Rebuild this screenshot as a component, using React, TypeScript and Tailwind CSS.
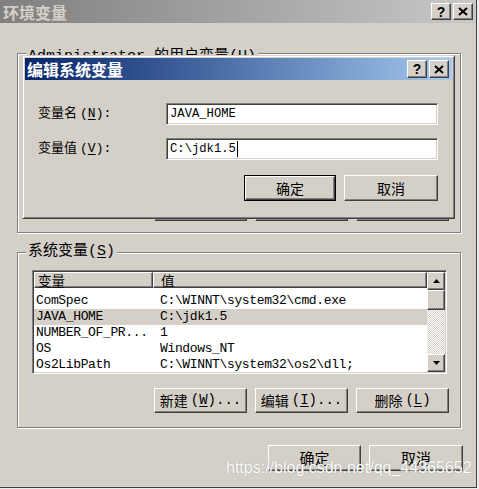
const raised =
  "border border-t-white border-l-white border-r-[#404040] border-b-[#404040] shadow-[inset_-1px_-1px_0_#808080]";
const sunken =
  "border border-t-[#808080] border-l-[#808080] border-r-white border-b-white shadow-[inset_1px_1px_0_#404040,inset_-1px_-1px_0_#d4d0c8]";
const cjk = "[font-family:'Noto_Sans_CJK_SC',sans-serif]";
const mono = "[font-family:'Liberation_Mono','Noto_Sans_CJK_SC',monospace]";

function CaptionButton({ kind, h }: { kind: "help" | "close"; h: string }) {
  return (
    <div className={`w-[20px] ${h} bg-[#d4d0c8] ${raised} flex items-center justify-center`}>
      {kind === "help" ? (
        <span className="text-[14px] leading-none font-bold text-black [font-family:'Liberation_Sans',sans-serif]">
          ?
        </span>
      ) : (
        <svg width="10" height="9" viewBox="0 0 10 9">
          <path d="M1 1 L9 8 M9 1 L1 8" stroke="black" strokeWidth="2" />
        </svg>
      )}
    </div>
  );
}

function Key({ k }: { k: string }) {
  return (
    <>
      (<span className="underline underline-offset-2">{k}</span>)
    </>
  );
}

function Button({
  children,
  className = "",
  isDefault = false,
}: {
  children: React.ReactNode;
  className?: string;
  isDefault?: boolean;
}) {
  const inner = (
    <div
      className={`w-full h-full bg-[#d4d0c8] ${raised} flex items-center justify-center text-black`}
    >
      {children}
    </div>
  );
  if (isDefault) {
    return <div className={`border border-black ${className}`}>{inner}</div>;
  }
  return <div className={className}>{inner}</div>;
}

const rows = [
  ["ComSpec", "C:\\WINNT\\system32\\cmd.exe"],
  ["JAVA_HOME", "C:\\jdk1.5"],
  ["NUMBER_OF_PR...", "1"],
  ["OS", "Windows_NT"],
  ["Os2LibPath", "C:\\WINNT\\system32\\os2\\dll;"],
];

function EditDialog() {
  return (
    <div className="absolute left-[22px] top-[55px] w-[433px] h-[164px] bg-[#d4d0c8] border border-t-[#d4d0c8] border-l-[#d4d0c8] border-r-[#404040] border-b-[#404040] shadow-[inset_1px_1px_0_#fff,inset_-1px_-1px_0_#808080] p-[2px] flex flex-col">
      <div className="h-[22px] flex items-center justify-between pl-[2px] pr-[3px] bg-gradient-to-r from-[#0a246a] to-[#a6caf0]">
        <span className={`text-white font-bold text-[16px] leading-none ${cjk}`}>编辑系统变量</span>
        <div className="flex gap-[2px]">
          <CaptionButton kind="help" h="h-[18px]" />
          <CaptionButton kind="close" h="h-[18px]" />
        </div>
      </div>
      <div className={`flex flex-col pl-[13px] pr-[14px] pt-[23px] text-[13px] ${mono}`}>
        <div className="flex items-center">
          <span className="w-[128px] text-black">
            变量名<span className="ml-[3px]"><Key k="N" />:</span>
          </span>
          <div className={`w-[272px] h-[22px] bg-white ${sunken} flex items-center pl-[3px] text-[12.2px] text-black`}>
            JAVA_HOME
          </div>
        </div>
        <div className="flex items-center mt-[13px]">
          <span className="w-[128px] text-black">
            变量值<span className="ml-[3px]"><Key k="V" />:</span>
          </span>
          <div className={`w-[272px] h-[22px] bg-white ${sunken} flex items-center pl-[3px] text-[12.2px] text-black`}>
            C:\jdk1.5
            <span className="inline-block w-px h-[16px] bg-black ml-px" />
          </div>
        </div>
        <div className={`flex justify-end gap-[8px] mt-[15px] text-[14px] ${cjk}`}>
          <Button isDefault className="w-[92px] h-[26px]">确定</Button>
          <Button className="w-[94px] h-[26px]">取消</Button>
        </div>
      </div>
    </div>
  );
}

function Group({
  label,
  labelTop,
  className = "",
  children,
}: {
  label: React.ReactNode;
  labelTop: string;
  className?: string;
  children: React.ReactNode;
}) {
  return (
    <div
      className={`relative border border-[#808080] shadow-[inset_1px_1px_0_#fff,1px_1px_0_#fff] ${className}`}
    >
      <span
        className={`absolute left-[8px] ${labelTop} px-[2px] bg-[#d4d0c8] text-[15px] leading-[18px] text-black`}
      >
        {label}
      </span>
      {children}
    </div>
  );
}

export default function App() {
  return (
    <div className="w-[479px] h-[489px] bg-[#ececec]">
      <div className="relative w-[477px] h-[488px] bg-[#d4d0c8] border-r border-b border-[#404040] flex flex-col">
        <div className="h-[23px] flex items-center justify-between pl-[3px] pr-[3px] bg-gradient-to-r from-[#808080] to-[#c8c8c8]">
          <span className={`text-[#d4d0c8] font-bold text-[16px] leading-none ${cjk}`}>环境变量</span>
          <div className="flex gap-[2px]">
            <CaptionButton kind="help" h="h-[17px]" />
            <CaptionButton kind="close" h="h-[17px]" />
          </div>
        </div>

        <div className={`flex flex-col pl-[17px] ${mono}`}>
          <Group
            label={
              <>
                Administrator 的用户变量<Key k="U" />
              </>
            }
            labelTop="-top-[6px]"
            className="mt-[30px] w-[444px] h-[180px] flex flex-col justify-end pb-[11px]"
          >
            <div className={`flex justify-end gap-[8px] pr-[11px] text-[14px] ${cjk}`}>
              <Button className="w-[93px] h-[25px]">新建(N)...</Button>
              <Button className="w-[93px] h-[25px]">编辑(E)...</Button>
              <Button className="w-[93px] h-[25px]">删除(D)</Button>
            </div>
          </Group>

          <Group
            label={
              <>
                系统变量<Key k="S" />
              </>
            }
            labelTop="-top-[10px]"
            className="mt-[19px] w-[444px] h-[176px] flex flex-col"
          >
            <div className={`mt-[17px] ml-[14px] w-[415px] h-[104px] bg-white ${sunken} p-[1px] flex`}>
              <div className="flex-1 flex flex-col overflow-hidden">
                <div className={`h-[18px] flex text-[13.5px] leading-[14px] ${cjk}`}>
                  <div className={`w-[119px] bg-[#d4d0c8] ${raised} flex items-center pl-[3px]`}>变量</div>
                  <div className={`flex-1 bg-[#d4d0c8] ${raised} flex items-center pl-[7px]`}>值</div>
                </div>
                <div className="pt-[5px] flex flex-col text-[13px] tracking-[-0.36px] text-black">
                  {rows.map(([name, value], i) => (
                    <div
                      key={name}
                      className={`h-[16px] flex items-center whitespace-nowrap ${i === 1 ? "bg-[#d4d0c8]" : ""}`}
                    >
                      <span className="w-[126px] pl-[2px]">{name}</span>
                      <span>{value}</span>
                    </div>
                  ))}
                </div>
              </div>
              <div className="w-[18px] flex flex-col">
                <div className={`h-[18px] bg-[#d4d0c8] ${raised} flex items-center justify-center`}>
                  <svg width="7" height="4" viewBox="0 0 7 4">
                    <path d="M3.5 0 L7 4 H0 Z" fill="black" />
                  </svg>
                </div>
                <div className={`h-[20px] bg-[#d4d0c8] ${raised}`} />
                <div className="flex-1 bg-[repeating-conic-gradient(#ffffff_0_25%,#d4d0c8_0_50%)] bg-[length:2px_2px]" />
                <div className={`h-[18px] bg-[#d4d0c8] ${raised} flex items-center justify-center`}>
                  <svg width="7" height="4" viewBox="0 0 7 4">
                    <path d="M0 0 H7 L3.5 4 Z" fill="black" />
                  </svg>
                </div>
              </div>
            </div>
            <div className={`flex justify-end gap-[8px] pr-[11px] mt-[14px] text-[14px] ${cjk}`}>
              <Button className="w-[93px] h-[25px]">
                新建<span className={`${mono} ml-[3px]`}><Key k="W" />...</span>
              </Button>
              <Button className="w-[93px] h-[25px]">
                编辑<span className={`${mono} ml-[3px]`}><Key k="I" />...</span>
              </Button>
              <Button className="w-[93px] h-[25px]">
                删除<span className={`${mono} ml-[3px]`}><Key k="L" /></span>
              </Button>
            </div>
          </Group>
        </div>

        <div className={`flex justify-end gap-[8px] pr-[13px] mt-[17px] text-[15px] ${cjk}`}>
          <Button className="w-[93px] h-[26px]">确定</Button>
          <Button className="w-[94px] h-[26px]">取消</Button>
        </div>

        <span className="absolute left-[226px] top-[458px] text-[16px] leading-[20px] text-white [font-family:'Liberation_Sans',sans-serif] [text-shadow:0_0_1px_#8a8a8a]">
          https://blog.csdn.net/qq_44365652
        </span>

        <EditDialog />
      </div>
    </div>
  );
}
